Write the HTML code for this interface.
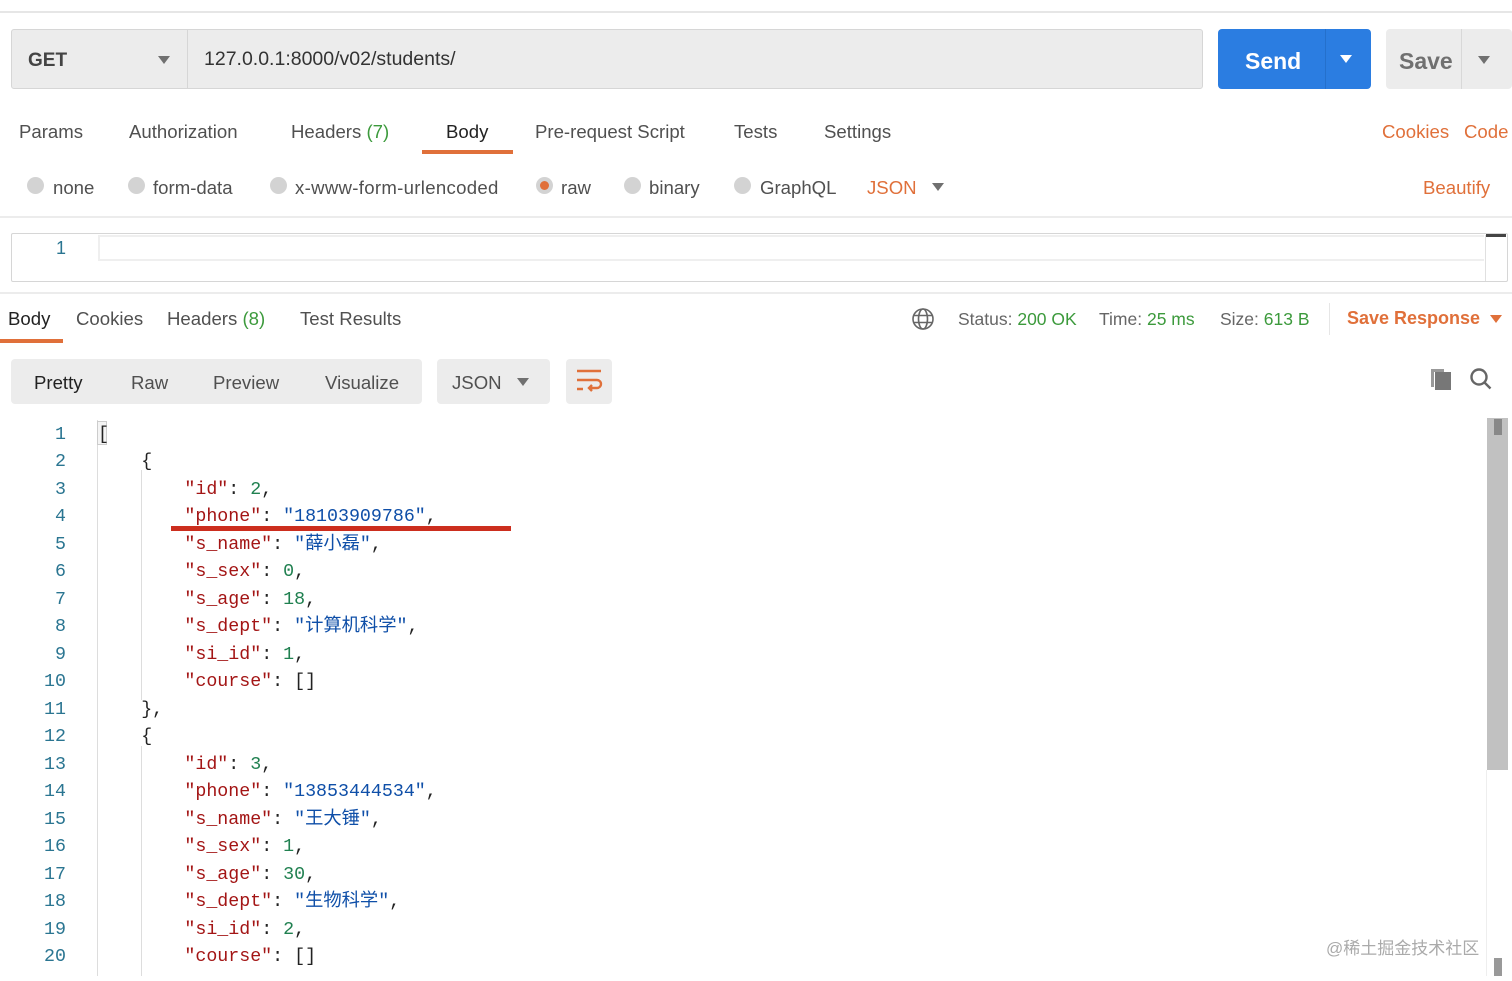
<!DOCTYPE html>
<html><head><meta charset="utf-8"><style>
*{margin:0;padding:0;box-sizing:border-box}
html,body{width:1512px;height:981px;overflow:hidden}
body{background:#fff;font-family:"Liberation Sans","Noto Sans CJK SC",sans-serif;color:#505050;position:relative}
.a{position:absolute;white-space:nowrap}
.t{font-size:18.6px;color:#505050}
.o{color:#e0703a}
.g{color:#3c9a3c}
.rad{position:absolute;width:17px;height:17px;border-radius:50%;background:#d3d3d3}
.code{font-family:"Liberation Mono","Noto Sans CJK SC",monospace;font-size:18.3px;line-height:27.5px;height:27.5px}
.ln{position:absolute;width:66px;text-align:right;color:#2a7591;font-family:"Liberation Mono",monospace;font-size:18.3px;line-height:27.5px}
.k{color:#a31515}.s{color:#0f4fa8}.n{color:#208050}.p{color:#222}
.tri{position:absolute;width:0;height:0;border-left:6px solid transparent;border-right:6px solid transparent;border-top:8px solid #707070}
</style></head><body>
<div class="a" style="left:0;top:11px;width:1512px;height:2px;background:#e6e6e6"></div>
<div class="a" style="left:11px;top:29px;width:1192px;height:60px;background:#ececec;border:1px solid #d6d6d6;border-radius:3px"></div>
<div class="a" style="left:187px;top:30px;width:1px;height:58px;background:#d6d6d6"></div>
<div class="a" style="left:28px;top:50px;font-size:19px;font-weight:bold;color:#444">GET</div>
<div class="tri" style="left:158px;top:56px"></div>
<div class="a" style="left:204px;top:48px;font-size:19.5px;color:#333">127.0.0.1:8000/v02/students/</div>
<div class="a" style="left:1218px;top:29px;width:153px;height:60px;background:#2b7de1;border-radius:4px"></div>
<div class="a" style="left:1325px;top:29px;width:1px;height:60px;background:#2470cc"></div>
<div class="a" style="left:1245px;top:48px;font-size:23px;font-weight:bold;color:#fff">Send</div>
<div class="tri" style="left:1340px;top:55px;border-top-color:#fff"></div>
<div class="a" style="left:1386px;top:29px;width:126px;height:60px;background:#ececec;border-radius:4px"></div>
<div class="a" style="left:1461px;top:29px;width:1px;height:60px;background:#d8d8d8"></div>
<div class="a" style="left:1399px;top:48px;font-size:23px;font-weight:bold;color:#707070">Save</div>
<div class="tri" style="left:1478px;top:56px"></div>
<div class="a t" style="left:19px;top:121px">Params</div>
<div class="a t" style="left:129px;top:121px">Authorization</div>
<div class="a t" style="left:291px;top:121px">Headers <span class="g">(7)</span></div>
<div class="a t" style="left:446px;top:121px;color:#222">Body</div>
<div class="a" style="left:422px;top:150px;width:91px;height:4px;background:#e0703a"></div>
<div class="a t" style="left:535px;top:121px">Pre-request Script</div>
<div class="a t" style="left:734px;top:121px">Tests</div>
<div class="a t" style="left:824px;top:121px">Settings</div>
<div class="a t o" style="left:1382px;top:121px">Cookies</div>
<div class="a t o" style="left:1464px;top:121px">Code</div>
<div class="rad" style="left:27px;top:177px"></div><div class="a t" style="left:53px;top:177px">none</div>
<div class="rad" style="left:128px;top:177px"></div><div class="a t" style="left:153px;top:177px">form-data</div>
<div class="rad" style="left:270px;top:177px"></div><div class="a t" style="left:295px;top:177px;letter-spacing:0.3px">x-www-form-urlencoded</div>
<div class="rad" style="left:536px;top:177px"></div><div class="a" style="left:540px;top:181px;width:9px;height:9px;border-radius:50%;background:#e0703a"></div><div class="a t" style="left:561px;top:177px">raw</div>
<div class="rad" style="left:624px;top:177px"></div><div class="a t" style="left:649px;top:177px">binary</div>
<div class="rad" style="left:734px;top:177px"></div><div class="a t" style="left:760px;top:177px">GraphQL</div>
<div class="a t o" style="left:867px;top:177px">JSON</div>
<div class="tri" style="left:932px;top:183px"></div>
<div class="a t o" style="left:1423px;top:177px">Beautify</div>
<div class="a" style="left:0;top:216px;width:1512px;height:2px;background:#ececec"></div>
<div class="a" style="left:11px;top:233px;width:1497px;height:49px;border:1px solid #d6d6d6;border-radius:2px"></div>
<div class="a" style="left:98px;top:235px;width:1386px;height:26px;border:2px solid #efefef;border-right:none"></div>
<div class="a" style="left:1485px;top:235px;width:1px;height:46px;background:#e0e0e0"></div>
<div class="a" style="left:1486px;top:234px;width:20px;height:3px;background:#444"></div>
<div class="a" style="left:56px;top:238px;color:#2a7591;font-size:18px">1</div>
<div class="a" style="left:0;top:292px;width:1512px;height:2px;background:#ececec"></div>
<div class="a t" style="left:8px;top:308px;color:#222">Body</div>
<div class="a" style="left:0;top:339px;width:63px;height:4px;background:#e0703a"></div>
<div class="a t" style="left:76px;top:308px">Cookies</div>
<div class="a t" style="left:167px;top:308px">Headers <span class="g">(8)</span></div>
<div class="a t" style="left:300px;top:308px">Test Results</div>
<svg class="a" style="left:911px;top:307px" width="24" height="24" viewBox="0 0 24 24" fill="none" stroke="#666" stroke-width="1.6"><circle cx="12" cy="12" r="10"/><ellipse cx="12" cy="12" rx="4.5" ry="10"/><path d="M2.5 8.5h19M2.5 15.5h19"/></svg>
<div class="a" style="left:958px;top:309px;font-size:17.5px;color:#666">Status: <span class="g">200 OK</span></div>
<div class="a" style="left:1099px;top:309px;font-size:17.5px;color:#666">Time: <span class="g">25 ms</span></div>
<div class="a" style="left:1220px;top:309px;font-size:17.5px;color:#666">Size: <span class="g">613 B</span></div>
<div class="a" style="left:1329px;top:303px;width:1px;height:32px;background:#e6e6e6"></div>
<div class="a" style="left:1347px;top:308px;font-size:18px;font-weight:bold;color:#e0703a">Save Response</div>
<div class="tri" style="left:1490px;top:315px;border-top-color:#e0703a"></div>
<div class="a" style="left:11px;top:359px;width:411px;height:45px;background:#ececec;border-radius:4px"></div>
<div class="a t" style="left:34px;top:372px;color:#222">Pretty</div>
<div class="a t" style="left:131px;top:372px">Raw</div>
<div class="a t" style="left:213px;top:372px">Preview</div>
<div class="a t" style="left:325px;top:372px">Visualize</div>
<div class="a" style="left:437px;top:359px;width:113px;height:45px;background:#ececec;border-radius:4px"></div>
<div class="a t" style="left:452px;top:372px">JSON</div>
<div class="tri" style="left:517px;top:378px"></div>
<div class="a" style="left:566px;top:359px;width:46px;height:45px;background:#ececec;border-radius:4px"></div>
<svg class="a" style="left:575px;top:368px" width="28" height="26" viewBox="0 0 28 26" fill="none" stroke="#e0703a" stroke-width="2.4"><path d="M2 3h24M2 12h20a4 4 0 0 1 0 8h-8M17 17l-3 3 3 3M2 21h6"/></svg>
<svg class="a" style="left:1429px;top:367px" width="24" height="24" viewBox="0 0 24 24"><rect x="6" y="5" width="16" height="18" fill="#777"/><path d="M2 2h13v3H5v15H2z" fill="#999"/></svg>
<svg class="a" style="left:1469px;top:367px" width="24" height="24" viewBox="0 0 24 24" fill="none" stroke="#666" stroke-width="2.4"><circle cx="10" cy="10" r="7.5"/><path d="M15.5 15.5l6 6"/></svg>
<div class="a" style="left:97px;top:420px;width:1px;height:556px;background:#ddd"></div>
<div class="a" style="left:141px;top:470px;width:1px;height:230px;background:#ddd"></div>
<div class="a" style="left:141px;top:746px;width:1px;height:230px;background:#ddd"></div>
<div class="a" style="left:97px;top:421px;width:10px;height:24px;border:1px solid #ccc;background:#f4f4f4"></div>
<div class="a" style="left:1487px;top:418px;width:21px;height:352px;background:#c1c1c1"></div>
<div class="a" style="left:1494px;top:419px;width:8px;height:16px;background:#888"></div>
<div class="a" style="left:1486px;top:770px;width:1px;height:206px;background:#eee"></div>
<div class="a" style="left:1494px;top:958px;width:8px;height:18px;background:#999"></div>
<div class="a" style="left:1326px;top:934px;font-size:17px;color:#aaa">@稀土掘金技术社区</div>
<div id="c"></div>
<div class="a" style="left:171px;top:526px;width:340px;height:5px;background:#cc2e1e"></div>
<script>
var L=[
['','<span class="p">[</span>'],
['    ','<span class="p">{</span>'],
['        ','<span class="k">"id"</span><span class="p">: </span><span class="n">2</span><span class="p">,</span>'],
['        ','<span class="k">"phone"</span><span class="p">: </span><span class="s">"18103909786"</span><span class="p">,</span>'],
['        ','<span class="k">"s_name"</span><span class="p">: </span><span class="s">"薛小磊"</span><span class="p">,</span>'],
['        ','<span class="k">"s_sex"</span><span class="p">: </span><span class="n">0</span><span class="p">,</span>'],
['        ','<span class="k">"s_age"</span><span class="p">: </span><span class="n">18</span><span class="p">,</span>'],
['        ','<span class="k">"s_dept"</span><span class="p">: </span><span class="s">"计算机科学"</span><span class="p">,</span>'],
['        ','<span class="k">"si_id"</span><span class="p">: </span><span class="n">1</span><span class="p">,</span>'],
['        ','<span class="k">"course"</span><span class="p">: []</span>'],
['    ','<span class="p">},</span>'],
['    ','<span class="p">{</span>'],
['        ','<span class="k">"id"</span><span class="p">: </span><span class="n">3</span><span class="p">,</span>'],
['        ','<span class="k">"phone"</span><span class="p">: </span><span class="s">"13853444534"</span><span class="p">,</span>'],
['        ','<span class="k">"s_name"</span><span class="p">: </span><span class="s">"王大锤"</span><span class="p">,</span>'],
['        ','<span class="k">"s_sex"</span><span class="p">: </span><span class="n">1</span><span class="p">,</span>'],
['        ','<span class="k">"s_age"</span><span class="p">: </span><span class="n">30</span><span class="p">,</span>'],
['        ','<span class="k">"s_dept"</span><span class="p">: </span><span class="s">"生物科学"</span><span class="p">,</span>'],
['        ','<span class="k">"si_id"</span><span class="p">: </span><span class="n">2</span><span class="p">,</span>'],
['        ','<span class="k">"course"</span><span class="p">: []</span>']];
var h='';
for(var i=0;i<L.length;i++){var y=421.5+i*27.5;
h+='<div class="ln" style="left:0;top:'+y+'px">'+(i+1)+'</div>';
h+='<div class="a code" style="left:'+(98+L[i][0].length*10.8)+'px;top:'+y+'px">'+L[i][1]+'</div>';}
document.getElementById('c').innerHTML=h;
</script>
</body></html>
